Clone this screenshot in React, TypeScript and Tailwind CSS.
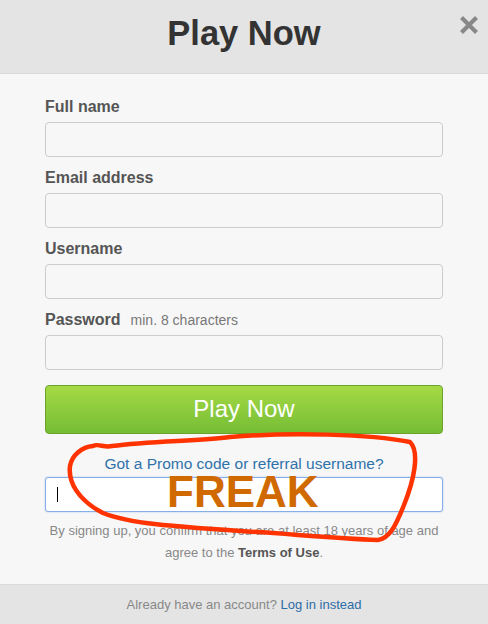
import React from "react";

function Field({ label, hint }: { label: string; hint?: string }) {
  return (
    <div className="flex flex-col">
      <div className="flex items-baseline gap-[10px] h-[18px] leading-[18px]">
        <span className="text-[16px] font-bold text-[#555]">{label}</span>
        {hint && <span className="text-[14px] text-[#777]">{hint}</span>}
      </div>
      <div className="mt-[6px] h-[35px] rounded-[4px] border border-[#cccccc] bg-[#f7f7f7]" />
    </div>
  );
}

export default function App() {
  return (
    <div
      className="relative w-[488px] h-[624px] flex flex-col bg-[#f7f7f7] overflow-hidden"
      style={{ fontFamily: '"Liberation Sans", Arial, sans-serif' }}
    >
      <div className="relative h-[74px] shrink-0 bg-[#e4e4e4] border-b border-[#d9d9d9] flex items-center justify-center pb-[6px]">
        <h1 className="text-[34.5px] font-bold text-[#333] leading-none">Play Now</h1>
        <svg className="absolute right-[10px] top-[16px]" width="18" height="18" viewBox="0 0 18 18">
          <path d="M3 3 L15 15 M15 3 L3 15" stroke="#888" strokeWidth="4.2" strokeLinecap="square" />
        </svg>
      </div>

      <div className="flex-1 px-[45px] pt-[24px] flex flex-col">
        <div className="flex flex-col gap-[12px]">
          <Field label="Full name" />
          <Field label="Email address" />
          <Field label="Username" />
          <Field label="Password" hint="min. 8 characters" />
        </div>

        <button className="mt-[15px] h-[49px] rounded-[4px] border border-[#6aa22c] bg-gradient-to-b from-[#a6da45] to-[#74bd35] text-white text-[24px] flex items-center justify-center pb-[2px]">
          Play Now
        </button>

        <div className="mt-[21px] text-center text-[15.5px] leading-[18px] text-[#2f72aa]">
          Got a Promo code or referral username?
        </div>

        <div className="relative mt-[4px] h-[35px] rounded-[3px] border border-[#88aee8] bg-white shadow-[0_0_2px_#a9c4ee] flex items-center">
          <span className="ml-[11px] w-px h-[15px] bg-black" />
          <span className="absolute left-[121px] top-[-3px] text-[44px] font-bold text-[#d06a00] leading-[34px]">
            FREAK
          </span>
        </div>

        <p className="mt-[8px] -mx-[30px] whitespace-nowrap text-center text-[13px] leading-[22px] text-[#888]">
          By signing up, you confirm that you are at least 18 years of age and
          <br />
          agree to the <span className="font-bold text-[#555]">Terms of Use</span>.
        </p>
      </div>

      <div className="h-[40px] shrink-0 border-t border-[#d9d9d9] bg-[#e4e4e4] flex items-center justify-center text-[13px] text-[#888]">
        <span>
          Already have an account? <span className="text-[#2d6ca6]">Log in instead</span>
        </span>
      </div>

      <svg className="absolute left-0 top-0 pointer-events-none" width="488" height="624" viewBox="0 0 488 624">
        <path
          d="M93 446 C 98 443, 104 448, 112 446 C 150 441, 200 441, 230 437 C 290 432, 370 434, 410 442 C 420 452, 414 480, 404 505 C 396 525, 390 538, 378 540 C 330 538, 280 533, 240 531 C 180 527, 130 524, 103 513 C 78 500, 68 482, 70 466 C 72 455, 82 447, 93 446"
          fill="none"
          stroke="#ff3300"
          strokeWidth="4.5"
          strokeLinecap="round"
          strokeLinejoin="round"
        />
      </svg>
    </div>
  );
}
